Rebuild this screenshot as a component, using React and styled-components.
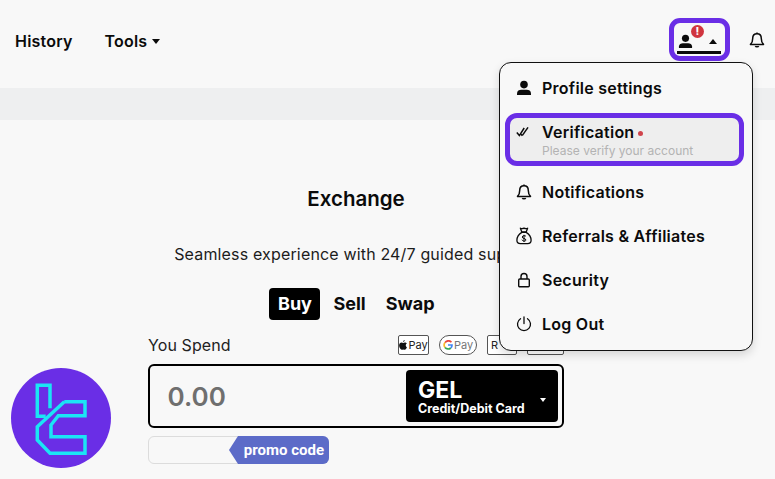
import React from 'react'
import styled, { createGlobalStyle } from 'styled-components'

const GlobalStyle = createGlobalStyle`
  html, body { margin: 0; padding: 0; background: #f8f8f8; }
  body { font-family: Inter, "Liberation Sans", sans-serif; color: #0b0b0b; overflow: hidden; }
  * { box-sizing: border-box; }
`

const Page = styled.div`
  position: relative;
  width: 775px;
  height: 479px;
  overflow: hidden;
`

const Header = styled.header`
  height: 88px;
  padding: 18px 10px 28px 15px;
  display: flex;
  align-items: center;
`

const NavLink = styled.span`
  display: flex;
  align-items: center;
  gap: 5px;
  margin-top: 4px;
  margin-right: 32px;
  font-size: 16px;
  font-weight: 600;
  letter-spacing: 0.2px;
`

const Caret = styled.i`
  display: block;
  width: 0;
  height: 0;
  border-left: ${p => p.$w || 4.5}px solid transparent;
  border-right: ${p => p.$w || 4.5}px solid transparent;
  border-${p => (p.$up ? 'bottom' : 'top')}: ${p => (p.$w ? p.$w + 1 : 5)}px solid ${p => p.$color || '#0b0b0b'};
`

const Spacer = styled.div`
  flex: 1;
`

const UserButton = styled.div`
  position: relative;
  width: 61px;
  height: 43px;
  border: 5px solid #6a2ee6;
  border-radius: 11px;
  display: flex;
  align-items: center;
  padding: 4px 8px 0 4px;
  justify-content: space-between;
  margin-right: 19px;
  &::after {
    content: '';
    position: absolute;
    left: 3px;
    right: 4px;
    bottom: 2px;
    height: 3px;
    background: #0b0b0b;
  }
`

const AlertDot = styled.span`
  position: absolute;
  left: 17px;
  top: 2px;
  width: 13px;
  height: 13px;
  border-radius: 50%;
  background: #d0353f;
  color: #fff;
  font-size: 10.5px;
  font-weight: 800;
  line-height: 13px;
  text-align: center;
`

const BellButton = styled.div`
  display: flex;
  margin-top: 1px;
`

const Strip = styled.div`
  height: 32px;
  background: #eeeff0;
`

const Main = styled.main`
  width: 712px;
  display: flex;
  flex-direction: column;
  align-items: center;
  padding-top: 66px;
`

const Title = styled.h1`
  margin: 0;
  height: 26px;
  line-height: 26px;
  font-size: 20.5px;
  font-weight: 600;
`

const Subtitle = styled.p`
  margin: 32px 0 0;
  height: 20px;
  line-height: 20px;
  font-size: 16px;
  font-weight: 400;
  letter-spacing: 0.16px;
  white-space: nowrap;
  color: #1c1c1c;
`

const Tabs = styled.div`
  margin: 24px 8px 0 0;
  display: flex;
  align-items: center;
  gap: 13px;
  height: 32px;
`

const Tab = styled.span`
  font-size: 18px;
  font-weight: 700;
  padding: 0 ${p => (p.$active ? '8.5px' : '0')};
  height: 32px;
  line-height: 32px;
  border-radius: 4px;
  margin-right: ${p => (p.$gap ? '7px' : '0')};
  background: ${p => (p.$active ? '#000' : 'transparent')};
  color: ${p => (p.$active ? '#fff' : '#0b0b0b')};
`

const Form = styled.section`
  width: 416px;
  margin-top: 14px;
`

const LabelRow = styled.div`
  height: 22px;
  display: flex;
  align-items: center;
  justify-content: space-between;
  margin-bottom: 8px;
`

const Label = styled.span`
  font-size: 16px;
  letter-spacing: 0.1px;
  color: #222;
`

const Badges = styled.div`
  display: flex;
  gap: 10px;
`

const PayBadge = styled.span`
  width: ${p => p.$w}px;
  height: 20px;
  padding-left: ${p => (p.$left ? '3px' : '0')};
  border: 1px solid #555;
  border-radius: ${p => (p.$round ? '10px' : '2px')};
  background: #fff;
  display: flex;
  align-items: center;
  justify-content: ${p => (p.$left ? 'flex-start' : 'center')};
  gap: 1px;
  font-size: 11px;
  color: ${p => (p.$muted ? '#777' : '#222')};
`

const AmountCard = styled.div`
  height: 64px;
  border: 2.5px solid #000;
  border-radius: 6px;
  padding: 4px 4px 4px 17.5px;
  display: flex;
  align-items: stretch;
  justify-content: space-between;
`

const Amount = styled.span`
  align-self: center;
  font-size: 26px;
  font-weight: 600;
  color: #6f6f6f;
`

const CurrencySelect = styled.div`
  width: 152px;
  background: #000;
  border-radius: 4px;
  color: #fff;
  padding: 7px 12px 0 12px;
  display: flex;
  align-items: center;
  justify-content: space-between;
`

const CurrencyText = styled.div`
  display: flex;
  flex-direction: column;
  margin-top: -7px;
`

const CurrencyCode = styled.span`
  font-size: 23px;
  font-weight: 700;
  line-height: 24px;
`

const CurrencySub = styled.span`
  font-size: 12.5px;
  font-weight: 700;
  line-height: 13px;
  white-space: nowrap;
`

const PromoField = styled.div`
  width: 181px;
  height: 28px;
  margin-top: 8px;
  border: 1px solid #dcdcdc;
  border-radius: 6px;
  display: flex;
  justify-content: flex-end;
`

const PromoTag = styled.span`
  width: 100px;
  height: 28px;
  margin: -1px -1px 0 0;
  padding-right: 5px;
  background: #5c6bc8;
  border-radius: 0 6px 6px 0;
  clip-path: polygon(9px 0, 100% 0, 100% 100%, 9px 100%, 0 50%);
  color: #fff;
  font-family: Roboto, "Liberation Sans", sans-serif;
  font-size: 15px;
  font-weight: 700;
  line-height: 28px;
  text-align: right;
  white-space: nowrap;
`

const Menu = styled.nav`
  position: absolute;
  left: 499px;
  top: 62px;
  width: 254px;
  height: 289px;
  padding: 3px 6px 3px 5px;
  background: #f8f8f8;
  border: 1px solid #111;
  border-radius: 12px;
  box-shadow: 0 4px 10px rgba(0, 0, 0, 0.14);
  display: flex;
  flex-direction: column;
`

const MenuItem = styled.div`
  height: 44px;
  flex: none;
  padding-left: 11px;
  display: flex;
  align-items: center;
  gap: 10px;
  font-size: 16px;
  font-weight: 600;
  letter-spacing: 0.25px;
  white-space: nowrap;
`

const HighlightItem = styled.div`
  height: 53px;
  flex: none;
  margin: 3px 2px 4px 0;
  padding: 5px 0 0 6px;
  background: #eeeeee;
  border: 5px solid #6a2ee6;
  border-radius: 12px;
  display: flex;
  align-items: flex-start;
  gap: 10px;
`

const HighlightText = styled.div`
  display: flex;
  flex-direction: column;
`

const HighlightTitle = styled.span`
  display: flex;
  align-items: center;
  gap: 4px;
  font-size: 16px;
  font-weight: 600;
  letter-spacing: 0.25px;
  line-height: 18px;
`

const RedDot = styled.i`
  width: 5px;
  height: 5px;
  margin-top: 3px;
  border-radius: 50%;
  background: #d0444c;
`

const HighlightSub = styled.span`
  margin-top: 1.5px;
  font-size: 12px;
  line-height: 15px;
  color: #b3b3b3;
  white-space: nowrap;
`

const IconSlot = styled.span`
  width: 16px;
  height: 18px;
  display: flex;
  align-items: center;
  justify-content: center;
  flex: none;
`

const LogoBadge = styled.svg`
  position: absolute;
  left: 11px;
  top: 368px;
  width: 100px;
  height: 100px;
`

const UserIcon = ({ size = 16 }) => (
  <svg width={size} height={size} viewBox="0 0 16 16" fill="#0b0b0b">
    <circle cx="8" cy="4.6" r="3.8" />
    <path d="M1 15v-1.6C1 10.9 3.2 9.8 5.2 9.8h5.6c2 0 4.2 1.1 4.2 3.6V15z" />
  </svg>
)

const BellIcon = ({ size = 16 }) => (
  <svg width={size} height={size} viewBox="0 0 16 16" fill="none" stroke="#0b0b0b" strokeWidth="1.5" strokeLinejoin="round">
    <path d="M8 1.8c-2.7 0-4.3 2-4.3 4.6 0 3.2-.9 4.8-2.2 6h13c-1.300-1.200-2.200-2.800-2.200-6 0-2.600-1.600-4.600-4.300-4.600z" />
    <path d="M6.3 14.2c.4.8 3 .8 3.400 0" />
    <path d="M8 .6v1.200" />
  </svg>
)

const CheckIcon = () => (
  <svg width="16" height="12" viewBox="0 0 16 12" fill="none" stroke="#0b0b0b" strokeWidth="1.5">
    <path d="M.8 6.600l2.600 3L8.200 2" />
    <path d="M6.400 9.400L12 1.400" />
    <path d="M5 8.200l1.400 1.400" />
  </svg>
)

const BagIcon = () => (
  <svg width="16" height="18" viewBox="0 0 16 18" fill="none" stroke="#0b0b0b" strokeWidth="1.3" strokeLinejoin="round">
    <path d="M4.400 1.200c1.200.7 2.200.7 3.600 0 1.400.7 2.400.7 3.600 0L10.200 5H5.800z" />
    <path d="M5.800 5.400C2.800 7.400.9 10.600.9 13.200c0 2 1.300 3.400 3.500 3.400h7.200c2.200 0 3.500-1.400 3.500-3.400 0-2.600-1.900-5.800-4.900-7.800z" />
    <path d="M10 9.300C9.500 8.500 6.400 8.300 6.200 10c-.2 1.800 3.800 1.100 3.700 3-.1 1.600-3.300 1.500-4-.3M8 7.800v7.200" strokeWidth="1" />
  </svg>
)

const LockIcon = () => (
  <svg width="14" height="16" viewBox="0 0 14 16" fill="none" stroke="#0b0b0b" strokeWidth="1.4">
    <rect x="1.700" y="7" width="10.600" height="7.800" rx="1" />
    <path d="M4 7V4.500a3 3 0 0 1 6 0V7" />
  </svg>
)

const PowerIcon = () => (
  <svg width="16" height="16" viewBox="0 0 16 16" fill="none" stroke="#0b0b0b" strokeWidth="1.3" strokeLinecap="round">
    <path d="M8 1v6.500" />
    <path d="M4.500 2.700a6.500 6.500 0 1 0 7 0" />
  </svg>
)

const GoogleG = () => (
  <svg width="10" height="10" viewBox="0 0 10 10" fill="none" strokeWidth="1.7">
    <path d="M8.400 2.200A4 4 0 0 0 2 2.600" stroke="#e8453c" />
    <path d="M2 2.600a4 4 0 0 0 0 4.800" stroke="#f9bb2d" />
    <path d="M2 7.400a4 4 0 0 0 5.800.6" stroke="#34a853" />
    <path d="M7.800 8A4 4 0 0 0 9 5H5" stroke="#4285f4" />
  </svg>
)

const AppleMark = () => (
  <svg width="8" height="10" viewBox="0 0 8 10" fill="#111">
    <path d="M5.700 0c.1.800-.6 1.800-1.600 1.800C4 1 4.800.1 5.700 0zM7.900 7.200c-.5 1.200-1.200 2.500-2.200 2.500-.6 0-.9-.3-1.500-.3s-1 .3-1.500.3C1.600 9.700.1 7.500.1 5.600c0-1.900 1.200-3 2.400-3 .7 0 1.200.4 1.700.4s1-.5 1.900-.4c.5 0 1.300.2 1.700 1-1.500.9-1.300 3 .1 3.600z" />
  </svg>
)

const TcLogo = () => (
  <LogoBadge viewBox="0 0 100 100">
    <circle cx="50" cy="50" r="50" fill="#6a2ee6" />
    <g fill="none" stroke="#1be4f5" strokeWidth="3.5">
      <path d="M39 40.300V17.300H26.300V48.300H34.700" />
      <path d="M53.300 33.700H74V47.700H47.300L40 57V68.700H74V85.300H39L26.300 72V58.700L53.300 33.700" />
    </g>
  </LogoBadge>
)

function App() {
  return (
    <Page>
      <GlobalStyle />
      <Header>
        <NavLink>History</NavLink>
        <NavLink>Tools <Caret /></NavLink>
        <Spacer />
        <UserButton>
          <UserIcon size={15} />
          <AlertDot>!</AlertDot>
          <Caret $up $w={4} />
        </UserButton>
        <BellButton><BellIcon size={16} /></BellButton>
      </Header>
      <Strip />
      <Main>
        <Title>Exchange</Title>
        <Subtitle>Seamless experience with 24/7 guided support</Subtitle>
        <Tabs>
          <Tab $active>Buy</Tab>
          <Tab $gap>Sell</Tab>
          <Tab>Swap</Tab>
        </Tabs>
        <Form>
          <LabelRow>
            <Label>You Spend</Label>
            <Badges>
              <PayBadge $w={31}><AppleMark />Pay</PayBadge>
              <PayBadge $w={38} $round $muted><GoogleG />Pay</PayBadge>
              <PayBadge $w={30} $left>R</PayBadge>
              <PayBadge $w={37} />
            </Badges>
          </LabelRow>
          <AmountCard>
            <Amount>0.00</Amount>
            <CurrencySelect>
              <CurrencyText>
                <CurrencyCode>GEL</CurrencyCode>
                <CurrencySub>Credit/Debit Card</CurrencySub>
              </CurrencyText>
              <Caret $color="#fff" $w={3} />
            </CurrencySelect>
          </AmountCard>
          <PromoField>
            <PromoTag>promo code</PromoTag>
          </PromoField>
        </Form>
      </Main>
      <Menu>
        <MenuItem><IconSlot><UserIcon /></IconSlot>Profile settings</MenuItem>
        <HighlightItem>
          <IconSlot><CheckIcon /></IconSlot>
          <HighlightText>
            <HighlightTitle>Verification<RedDot /></HighlightTitle>
            <HighlightSub>Please verify your account</HighlightSub>
          </HighlightText>
        </HighlightItem>
        <MenuItem><IconSlot><BellIcon /></IconSlot>Notifications</MenuItem>
        <MenuItem><IconSlot><BagIcon /></IconSlot>Referrals &amp; Affiliates</MenuItem>
        <MenuItem><IconSlot><LockIcon /></IconSlot>Security</MenuItem>
        <MenuItem><IconSlot><PowerIcon /></IconSlot>Log Out</MenuItem>
      </Menu>
      <TcLogo />
    </Page>
  )
}

export default App
